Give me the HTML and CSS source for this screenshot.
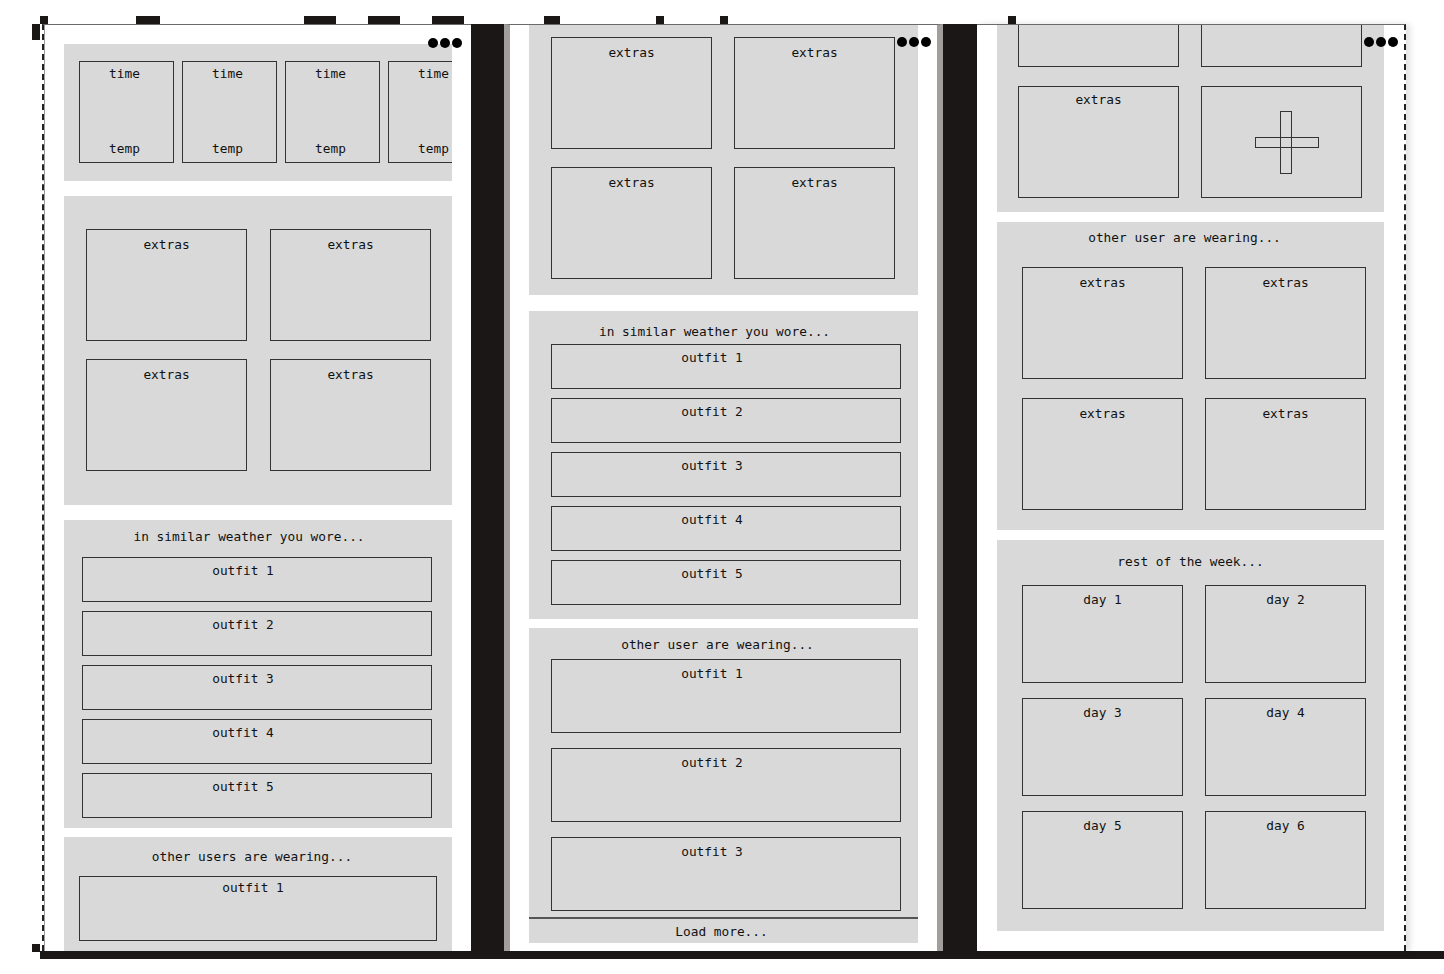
FILE: index.html
```html
<!DOCTYPE html>
<html lang="en">
<head>
<meta charset="UTF-8">
<title>Weather outfit - wireframes</title>
<link rel="stylesheet" href="styles.css">
</head>
<body>

<!-- tab marks above the frames -->
<div class="ticks">
  <span class="tick t1"></span>
  <span class="tick t2"></span>
  <span class="tick t3"></span>
  <span class="tick t4"></span>
  <span class="tick t5"></span>
  <span class="tick t6"></span>
  <span class="tick t7"></span>
  <span class="tick t8"></span>
  <span class="tick t9"></span>
</div>

<div class="frame">
  <div class="corners">
    <span class="corner corner-top"></span>
    <span class="corner corner-bottom"></span>
  </div>

  <div class="board">
    <div class="screens">
      <div class="spacer"></div>

      <!-- screen 1: top of the page -->
      <div class="screen screen-first">
        <div class="dots"><i></i><i></i><i></i></div>

        <section class="panel hourly">
          <div class="box hour"><span>time</span><span>temp</span></div>
          <div class="box hour"><span>time</span><span>temp</span></div>
          <div class="box hour"><span>time</span><span>temp</span></div>
          <div class="box hour"><span>time</span><span>temp</span></div>
        </section>

        <section class="panel extras-a">
          <div class="tiles tiles-a">
            <div class="box tile">extras</div>
            <div class="box tile">extras</div>
            <div class="box tile">extras</div>
            <div class="box tile">extras</div>
          </div>
        </section>

        <section class="panel similar-a">
          <div class="heading heading-similar">in similar weather you wore...</div>
          <div class="outfits outfits-a">
            <div class="box outfit">outfit 1</div>
            <div class="box outfit">outfit 2</div>
            <div class="box outfit">outfit 3</div>
            <div class="box outfit">outfit 4</div>
            <div class="box outfit">outfit 5</div>
          </div>
        </section>

        <section class="panel others-a">
          <div class="heading">other users are wearing...</div>
          <div class="outfits outfits-b">
            <div class="box outfit outfit-tall">outfit 1</div>
          </div>
        </section>
      </div>

      <div class="gutter gutter-a"></div>

      <!-- screen 2: scrolled down -->
      <div class="screen screen-mid">
        <div class="dots"><i></i><i></i><i></i></div>

        <section class="panel extras-b">
          <div class="tiles tiles-b">
            <div class="box tile">extras</div>
            <div class="box tile">extras</div>
            <div class="box tile">extras</div>
            <div class="box tile">extras</div>
          </div>
        </section>

        <section class="panel similar-b">
          <div class="heading heading-similar">in similar weather you wore...</div>
          <div class="outfits outfits-c">
            <div class="box outfit">outfit 1</div>
            <div class="box outfit">outfit 2</div>
            <div class="box outfit">outfit 3</div>
            <div class="box outfit">outfit 4</div>
            <div class="box outfit">outfit 5</div>
          </div>
        </section>

        <section class="panel others-b">
          <div class="heading">other user are wearing...</div>
          <div class="outfits outfits-d">
            <div class="box outfit">outfit 1</div>
            <div class="box outfit">outfit 2</div>
            <div class="box outfit">outfit 3</div>
          </div>
          <div class="load-more">Load more...</div>
        </section>
      </div>

      <div class="gutter gutter-b"></div>

      <!-- screen 3: extras expanded + week -->
      <div class="screen screen-last">
        <div class="dots"><i></i><i></i><i></i></div>

        <section class="panel extras-c">
          <div class="tiles tiles-c">
            <div class="box tile"></div>
            <div class="box tile"></div>
            <div class="box tile">extras</div>
            <div class="box tile tile-add">
              <svg class="plus" width="64" height="63" viewBox="0 0 64 63">
                <rect x="25.5" y="0.5" width="11" height="62" fill="none" stroke="#333"/>
                <rect x="0.5" y="26.5" width="63" height="10" fill="none" stroke="#333"/>
              </svg>
            </div>
          </div>
        </section>

        <section class="panel others-c">
          <div class="heading">other user are wearing...</div>
          <div class="tiles tiles-d">
            <div class="box tile">extras</div>
            <div class="box tile">extras</div>
            <div class="box tile">extras</div>
            <div class="box tile">extras</div>
          </div>
        </section>

        <section class="panel week">
          <div class="heading heading-week">rest of the week...</div>
          <div class="tiles days">
            <div class="box tile day">day 1</div>
            <div class="box tile day">day 2</div>
            <div class="box tile day">day 3</div>
            <div class="box tile day">day 4</div>
            <div class="box tile day">day 5</div>
            <div class="box tile day">day 6</div>
          </div>
        </section>
      </div>

      <div class="filler"></div>
    </div>
    <div class="baseline"></div>
  </div>
</div>

</body>
</html>
```

FILE: styles.css
```css
* { box-sizing: border-box; }
body {
  margin: 0;
  width: 1444px;
  height: 974px;
  overflow: hidden;
  background: #fff;
  color: #111;
  font-family: "DejaVu Sans Mono", "Liberation Mono", monospace;
  font-size: 12.8px;
  line-height: 15px;
}

/* marks along the top */
.ticks { display: flex; height: 8px; margin-top: 16px; }
.tick { background: #1b1717; }
.t1 { margin-left: 40px; width: 8px; }
.t2 { margin-left: 88px; width: 24px; }
.t3 { margin-left: 144px; width: 32px; }
.t4 { margin-left: 32px; width: 32px; }
.t5 { margin-left: 32px; width: 32px; }
.t6 { margin-left: 80px; width: 16px; }
.t7 { margin-left: 96px; width: 8px; }
.t8 { margin-left: 56px; width: 8px; }
.t9 { margin-left: 280px; width: 8px; }

.frame { display: flex; margin-left: 32px; }
.corners { width: 8px; display: flex; flex-direction: column; justify-content: space-between; padding-bottom: 7px; }
.corner { background: #1b1717; }
.corner-top { height: 16px; }
.corner-bottom { height: 8px; }

.board { flex: 1; display: flex; flex-direction: column; }
.screens { display: flex; height: 927px; }
.spacer { width: 2px; }
.filler { flex: 1; }
.gutter { background: #1b1717; }
.gutter-a { width: 33px; }
.gutter-b { width: 34px; }
.baseline { height: 8px; background: #1b1717; }

/* phone screens */
.screen {
  position: relative;
  overflow: hidden;
  background: #fff;
  border-top: 1px solid #6a6a6a;
  padding: 0 19px 0 19px;
}
.screen-first { width: 429px; border-left: 2px dashed #222; padding-left: 20px; box-shadow: inset 1px 0 #9a9a9a; }
.screen-mid { width: 439px; border-left: 6px solid #a29e9e; border-right: 6px solid #a29e9e; }
.screen-last { width: 429px; border-right: 2px dashed #222; padding-left: 20px; padding-right: 20px; box-shadow: 4px 0 6px rgba(0,0,0,.12); }

.dots { position: absolute; top: 13px; right: 9px; display: flex; gap: 2px; z-index: 2; }
.dots i { width: 10px; height: 10px; border-radius: 50%; background: #000; }
.screen-mid .dots, .screen-last .dots { top: 12px; right: 6px; }

.panel { background: #d9d9d9; }
.box { border: 1px solid #333; text-align: center; }
.heading { text-align: center; padding-right: 12px; }
.heading-similar { padding-right: 18px; }
.heading-week { padding-right: 0; }

/* hourly strip */
.hourly { margin-top: 19px; height: 137px; padding: 17px 0 0 15px; display: flex; gap: 8px; overflow: hidden; }
.hour { flex: 0 0 95px; height: 102px; display: flex; flex-direction: column; justify-content: space-between; align-items: center; padding: 4px 4px 6px 0; }

/* tile grids */
.tiles { display: grid; grid-template-columns: 161px 161px; column-gap: 22px; row-gap: 18px; }
.tile { height: 112px; padding-top: 7px; }

.extras-a { margin-top: 15px; height: 309px; padding-top: 33px; }
.tiles-a { margin-left: 22px; column-gap: 23px; }

.extras-b { height: 270px; padding-top: 12px; }
.tiles-b { margin-left: 22px; }

.extras-c { height: 187px; display: flex; flex-direction: column; justify-content: flex-end; padding-bottom: 14px; overflow: hidden; }
.tiles-c { margin-left: 21px; row-gap: 19px; }
.tiles-c .tile { padding-top: 5px; }
.tiles-c .tile-add { padding-top: 0; }
.plus { display: block; margin: 24px 0 0 53px; }

.others-c { margin-top: 10px; height: 308px; padding-top: 8px; }
.tiles-d { margin: 22px 0 0 25px; row-gap: 19px; }

.week { margin-top: 10px; height: 391px; padding-top: 14px; }
.days { margin: 16px 0 0 25px; row-gap: 15px; }
.day { height: 98px; padding-top: 6px; }

/* outfit lists */
.outfits { display: flex; flex-direction: column; gap: 9px; }
.outfit { height: 45px; padding: 5px 28px 0 0; }

.similar-a { margin-top: 15px; height: 308px; padding-top: 9px; }
.outfits-a { margin: 13px 20px 0 18px; }

.others-a { margin-top: 9px; height: 130px; padding-top: 12px; }
.outfits-b { margin: 12px 15px 0 15px; }
.outfit-tall { height: 65px; padding: 3px 10px 0 0; }

.similar-b { margin-top: 16px; height: 308px; padding-top: 13px; }
.outfits-c { margin: 5px 17px 0 22px; }

.others-b { margin-top: 9px; height: 315px; padding-top: 9px; }
.outfits-d { margin: 7px 17px 0 22px; gap: 15px; }
.outfits-d .outfit { height: 74px; padding-top: 6px; }
.load-more { margin-top: 6px; border-top: 2px solid #555; padding: 5px 4px 0 0; text-align: center; }
```
